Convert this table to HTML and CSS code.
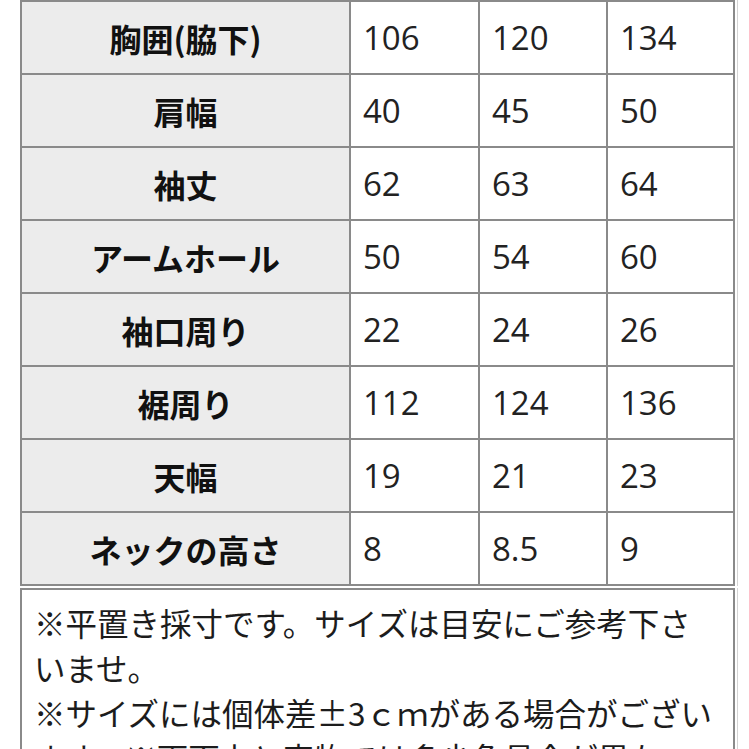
FILE: index.html
```html
<!DOCTYPE html>
<html lang="ja">
<head>
<meta charset="utf-8">
<title>サイズ表</title>
<link rel="stylesheet" href="styles.css">
</head>
<body>
<div class="page">
  <table class="size-table">
    <colgroup>
      <col class="c-label">
      <col class="c-a">
      <col class="c-b">
      <col class="c-c">
    </colgroup>
    <tbody>
      <tr><th>胸囲(脇下)</th><td>106</td><td>120</td><td>134</td></tr>
      <tr><th>肩幅</th><td>40</td><td>45</td><td>50</td></tr>
      <tr><th>袖丈</th><td>62</td><td>63</td><td>64</td></tr>
      <tr><th>アームホール</th><td>50</td><td>54</td><td>60</td></tr>
      <tr><th>袖口周り</th><td>22</td><td>24</td><td>26</td></tr>
      <tr><th>裾周り</th><td>112</td><td>124</td><td>136</td></tr>
      <tr><th>天幅</th><td>19</td><td>21</td><td>23</td></tr>
      <tr><th>ネックの高さ</th><td>8</td><td>8.5</td><td>9</td></tr>
    </tbody>
  </table>
  <div class="note">
    <p>※平置き採寸です。サイズは目安にご参考下さいませ。</p>
    <p>※サイズには個体差±3ｃｍがある場合がございます。※画面上と実物では多少色具合が異なって見える場合もございます。</p>
  </div>
</div>
</body>
</html>
```

FILE: styles.css
```css
html, body {
  margin: 0;
  padding: 0;
  background: #ffffff;
}

.page {
  width: 715px;
  margin-left: 20px;
}

.size-table {
  table-layout: fixed;
  width: 715px;
  border-collapse: separate;
  border-spacing: 2px;
  background: #8a8a8a;
  box-shadow: 2px 0 0 #ffffff, 3px 0 0 #d4d4d4;
}

.c-label { width: 327px; }
.c-a { width: 127px; }
.c-b { width: 126px; }
.c-c { width: 125px; }

.size-table th,
.size-table td {
  height: 71px;
  padding: 0;
  vertical-align: middle;
}

.size-table th {
  background: #ececec;
  color: #111111;
  font-family: "Noto Sans CJK JP", "Noto Sans", sans-serif;
  font-weight: 700;
  font-size: 32px;
  text-align: center;
}

.size-table td {
  background: #ffffff;
  color: #222222;
  font-family: "Open Sans", "Noto Sans", sans-serif;
  font-size: 33px;
  padding-left: 12px;
  text-align: left;
}

.note {
  margin-top: 2px;
  border: 2px solid #8a8a8a;
  padding: 10px 19px 0 12px;
  height: 200px;
  box-shadow: 2px 0 0 #ffffff, 3px 0 0 #d4d4d4;
  color: #1c1c1c;
  font-family: "Noto Sans CJK JP", sans-serif;
  font-size: 31.5px;
  line-height: 45px;
}

.note p {
  margin: 0;
}
```
